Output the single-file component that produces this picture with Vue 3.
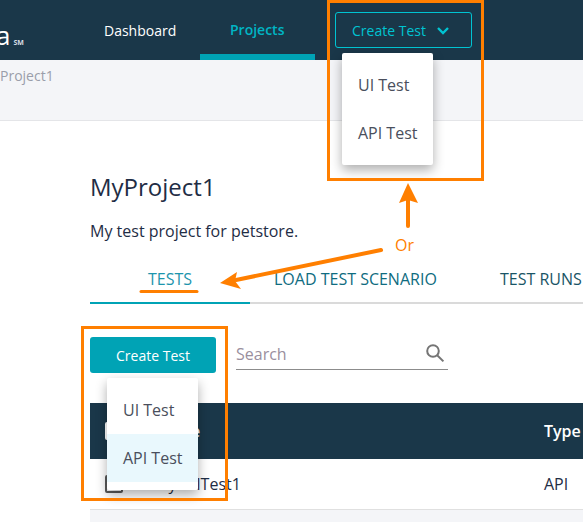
<template>
  <div class="page">
    <header class="topbar">
      <div class="logo"><span class="logo-a">a</span><span class="logo-sm">SM</span></div>
      <nav class="nav">
        <a class="nav-item">Dashboard</a>
        <a class="nav-item active">Projects</a>
      </nav>
      <div class="create-top">
        <button class="btn-outline">
          <span>Create Test</span>
          <svg width="12" height="8" viewBox="0 0 12 8"><path d="M1 1 6 6l5-5" fill="none" stroke="#00c4d2" stroke-width="2.4" /></svg>
        </button>
        <ul class="menu">
          <li v-for="item in menuItems" :key="item">{{ item }}</li>
        </ul>
      </div>
    </header>

    <div class="crumbs">Project1</div>

    <main class="content">
      <h1>MyProject1</h1>
      <p class="desc">My test project for petstore.</p>

      <div class="tabs">
        <a v-for="(tab, i) in tabs" :key="tab" class="tab" :class="{ current: i === 0 }">{{ tab }}</a>
      </div>

      <div class="toolbar">
        <div class="create-main">
          <button class="btn-solid">Create Test</button>
          <ul class="menu">
            <li v-for="(item, i) in menuItems" :key="item" :class="{ hover: i === 1 }">{{ item }}</li>
          </ul>
        </div>
        <div class="search">
          <span>Search</span>
          <svg width="20" height="20" viewBox="0 0 20 20"><circle cx="8" cy="8" r="5.8" fill="none" stroke="#757575" stroke-width="2" /><path d="M12.2 12.2 18.4 18.4" stroke="#757575" stroke-width="2" /></svg>
        </div>
      </div>

      <div class="table">
        <div class="row head">
          <span class="check"></span>
          <span class="name">Name</span>
          <span class="type">Type</span>
        </div>
        <div class="row">
          <span class="check"></span>
          <span class="name">MyAPITest1</span>
          <span class="type">API</span>
        </div>
        <div class="row-empty"></div>
      </div>
    </main>

    <!-- annotations drawn on top of the screenshot -->
    <div class="mark mark-top"></div>
    <div class="mark mark-main"></div>
    <span class="or">Or</span>
    <svg class="arrows" width="583" height="522" viewBox="0 0 583 522">
      <g stroke="#ff7f00" stroke-width="4" stroke-linecap="round" fill="none">
        <path d="M408 226V198" />
        <path d="M381 250 236 280" />
        <path d="M141 291.5H197" stroke-width="3" />
      </g>
      <path d="M408 183 418 203 408 200 399 203Z" fill="#ff7f00" />
      <path d="M220 283 237 272 235 281 241 289Z" fill="#ff7f00" />
    </svg>
  </div>
</template>

<script setup>
const menuItems = ['UI Test', 'API Test']
const tabs = ['TESTS', 'LOAD TEST SCENARIO', 'TEST RUNS']
</script>

<style>
html, body {
  margin: 0;
  overflow: hidden;
}
</style>

<style scoped>
.page {
  position: relative;
  width: 583px;
  height: 522px;
  overflow: hidden;
  background: #fff;
  font-family: "Open Sans", "Liberation Sans", sans-serif;
  color: #1f2d45;
}

.topbar {
  display: flex;
  height: 60px;
  background: #1a3749;
  color: #fff;
}

.logo {
  width: 104px;
  display: flex;
  align-items: baseline;
  padding-top: 19px;
  box-sizing: border-box;
}

.logo-a {
  font-size: 26px;
  line-height: 32px;
  margin-left: -4px;
  margin-right: 3px;
}

.logo-sm {
  font-size: 7px;
  font-weight: 700;
  color: #d5dde2;
}

.nav {
  display: flex;
}

.nav-item {
  width: 96px;
  line-height: 62px;
  height: 60px;
  box-sizing: border-box;
  font-size: 14px;
  font-weight: 500;
}

.nav-item.active {
  width: 115px;
  padding-left: 30px;
  line-height: 60px;
  color: #00b5c4;
  font-weight: 600;
  border-bottom: 6px solid #00a3b5;
}

.create-top {
  position: relative;
  margin-left: 20px;
  padding-top: 12px;
}

.btn-outline {
  display: flex;
  align-items: center;
  width: 137px;
  height: 36px;
  padding: 0 0 0 16px;
  background: transparent;
  border: 1px solid #00c4d2;
  border-radius: 3px;
  color: #00c4d2;
  font: 14px "Open Sans", sans-serif;
}

.btn-outline svg {
  margin-left: 11px;
  margin-top: 2px;
}

.menu {
  position: absolute;
  z-index: 2;
  width: 91px;
  margin: 0;
  padding: 8px 0;
  list-style: none;
  background: #fff;
  border-radius: 2px;
  box-shadow: 0 5px 12px rgba(0, 0, 0, 0.32);
  color: #4a4f5c;
  font-size: 16px;
}

.menu li {
  height: 48px;
  line-height: 48px;
  padding-left: 16px;
}

.menu li.hover {
  background: #e9f8fd;
}

.create-top .menu {
  top: 53px;
  left: 7px;
}

.crumbs {
  height: 61px;
  box-sizing: border-box;
  padding-top: 6px;
  background: #f4f5f8;
  border-bottom: 1px solid #e4e5e8;
  color: #9a9eaa;
  font-size: 14px;
  line-height: 19px;
}

.content {
  padding: 49px 0 0 90px;
}

h1 {
  margin: 0;
  font-size: 24px;
  font-weight: 400;
  line-height: 33px;
}

.desc {
  margin: 17px 0 0;
  font-size: 16px;
  line-height: 22px;
}

.tabs {
  display: flex;
  width: 560px;
  height: 47px;
  margin-top: 13px;
  border-bottom: 2px solid #dadada;
  white-space: nowrap;
}

.tab {
  width: 160px;
  height: 47px;
  line-height: 48px;
  font-size: 16px;
  text-align: center;
  color: #0f6c80;
  flex: none;
}

.tab:nth-child(2) {
  width: 188px;
  padding-left: 24px;
  text-align: left;
}

.tab:nth-child(3) {
  width: 100px;
  padding-left: 38px;
  text-align: left;
  color: #1a5566;
}

.tab.current {
  color: #1d95ad;
  border-bottom: 2px solid #00a3b5;
}

.toolbar {
  display: flex;
  align-items: flex-start;
  gap: 20px;
  margin-top: 33px;
}

.create-main {
  position: relative;
}

.create-main .menu {
  top: 41px;
  left: 17px;
}

.btn-solid {
  display: block;
  width: 126px;
  height: 36px;
  border: 0;
  border-radius: 3px;
  background: #00a3b5;
  color: #fff;
  font: 500 14px "Open Sans", sans-serif;
}

.search {
  display: flex;
  justify-content: space-between;
  align-items: center;
  width: 212px;
  height: 33px;
  box-sizing: border-box;
  border-bottom: 1px solid #8c8c8c;
  color: #9a8f9e;
  font-size: 16px;
}

.search span {
  margin-top: 2px;
}

.search svg {
  margin-right: 3px;
}

.table {
  width: 520px;
  margin-top: 30px;
}

.row {
  display: flex;
  align-items: center;
  height: 50px;
  border-bottom: 1px solid #e0e0e0;
  font-size: 16px;
}

.row.head {
  height: 56px;
  border: 0;
  background: #1a3749;
  color: #fff;
  font-weight: 600;
}

.check {
  width: 14px;
  height: 14px;
  margin-left: 15px;
  border: 2px solid #5a5a5a;
  border-radius: 2px;
  flex: none;
}

.head .check {
  background: #fff;
  border-color: #fff;
}

.name {
  width: 390px;
  margin-left: 31px;
  flex: none;
  white-space: nowrap;
}

.type {
  white-space: nowrap;
}

.row-empty {
  height: 20px;
  background: #f4f5f8;
}

.mark {
  position: absolute;
  box-sizing: border-box;
  border: 3px solid #ff7f00;
  z-index: 3;
}

.mark-top {
  left: 327px;
  top: 0;
  width: 157px;
  height: 181px;
}

.mark-main {
  left: 81px;
  top: 326px;
  width: 147px;
  height: 175px;
}

.or {
  position: absolute;
  left: 395px;
  top: 234px;
  z-index: 3;
  color: #ff7f00;
  font-size: 16px;
  line-height: 22px;
}

.arrows {
  position: absolute;
  left: 0;
  top: 0;
  z-index: 3;
  pointer-events: none;
}
</style>
